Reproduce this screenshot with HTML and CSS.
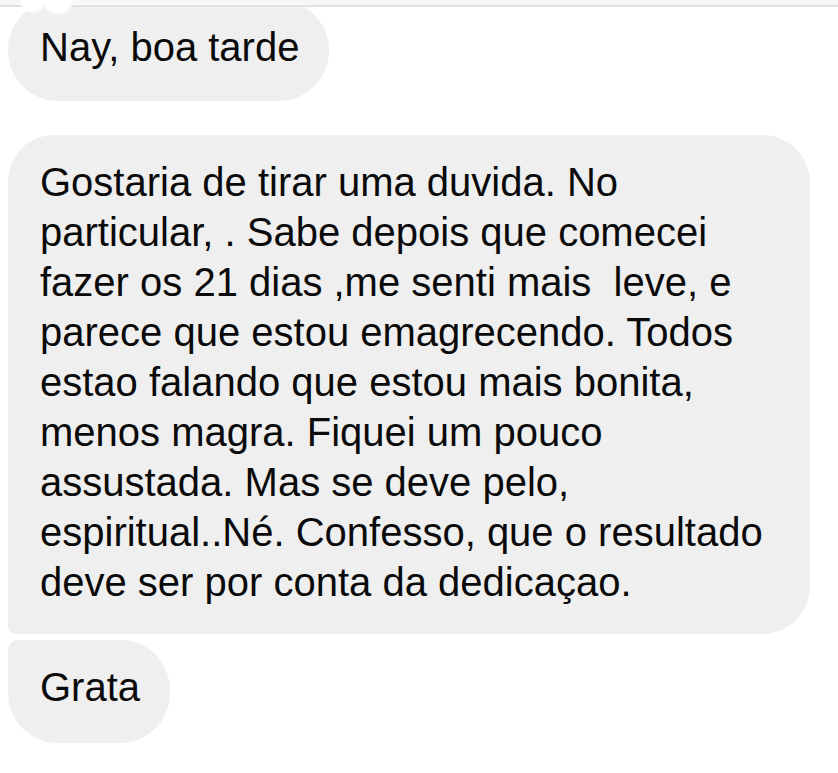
FILE: index.html
```html
<!DOCTYPE html>
<html lang="pt">
<head>
<meta charset="utf-8">
<title>Mensagens</title>
<link rel="stylesheet" href="styles.css">
</head>
<body>
<div class="topbar">
  <span class="blob blob-a"></span>
  <span class="blob blob-b"></span>
</div>
<main class="chat">
  <div class="bubble single">Nay, boa tarde</div>
  <div class="group">
    <div class="bubble first wide">Gostaria de tirar uma duvida. No<br>particular, . Sabe depois que comecei<br>fazer os 21 dias ,me senti mais&nbsp; leve, e<br>parece que estou emagrecendo. Todos<br>estao falando que estou mais bonita,<br>menos magra. Fiquei um pouco<br>assustada. Mas se deve pelo,<br>espiritual..Né. Confesso, que o resultado<br>deve ser por conta da dedicaçao.</div>
    <div class="bubble last">Grata</div>
  </div>
</main>
</body>
</html>
```

FILE: styles.css
```css
html, body {
  margin: 0;
  padding: 0;
  background: #ffffff;
}

body {
  font-family: "Liberation Sans", Arial, Helvetica, sans-serif;
  color: #0a0a0a;
  overflow: hidden;
}

.topbar {
  position: absolute;
  top: 0;
  left: 0;
  right: 0;
  height: 5px;
  background: #f7f7f7;
  border-bottom: 2px solid #e2e2e2;
  z-index: 2;
}

.blob {
  position: absolute;
  background: #ffffff;
  border-radius: 50%;
  filter: blur(1px);
}

.blob-a {
  left: 20px;
  top: -12px;
  width: 26px;
  height: 24px;
}

.blob-b {
  left: 44px;
  top: -10px;
  width: 28px;
  height: 24px;
}

.chat {
  display: flex;
  flex-direction: column;
  align-items: flex-start;
  gap: 34px;
  padding: 0 8px;
}

.group {
  display: flex;
  flex-direction: column;
  align-items: flex-start;
  gap: 6px;
  width: 100%;
}

.bubble {
  background: #efefef;
  font-size: 40px;
  line-height: 50px;
  padding: 22px 32px 29px 32px;
  box-sizing: border-box;
  white-space: nowrap;
}

.single {
  border-radius: 50px;
  padding-right: 30px;
}

.first {
  border-radius: 46px 48px 48px 8px;
  padding-bottom: 27px;
}

.wide {
  width: 802px;
}

.last {
  border-radius: 10px 50px 50px 50px;
  padding-right: 30px;
  padding-bottom: 31px;
}
```
